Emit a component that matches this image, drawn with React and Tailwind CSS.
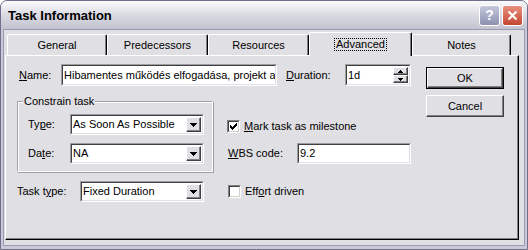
import React from "react";

const font = "font-['Liberation_Sans',Arial,sans-serif]";
const outerSunken =
  "border border-t-[#9d9da1] border-l-[#9d9da1] border-r-white border-b-white";
const innerSunken =
  "border border-t-[#404040] border-l-[#404040] border-r-[#e0dfe3] border-b-[#e0dfe3]";
const raised =
  "border border-t-white border-l-white border-r-[#404040] border-b-[#404040] bg-[#e0dfe3] shadow-[inset_-1px_-1px_0_#808080]";

const Arrow = ({ up }) => (
  <svg width="7" height="4" viewBox="0 0 7 4" shapeRendering="crispEdges">
    <path d={up ? "M3 0h1v1h1v1h1v1h1v1H0V3h1V2h1V1h1z" : "M0 0h7v1H6v1H5v1H4v1H3V3H2V2H1V1H0z"} fill="#000" />
  </svg>
);

const SmallArrow = ({ up }) => (
  <svg width="5" height="3" viewBox="0 0 5 3" shapeRendering="crispEdges">
    <path d={up ? "M2 0h1v1h1v1h1v1H0V2h1V1h1z" : "M0 0h5v1H4v1H3v1H2V2H1V1H0z"} fill="#000" />
  </svg>
);

const Field = ({ value, className, children }) => (
  <div className={`${outerSunken} ${className}`}>
    <div className={`${innerSunken} flex h-full items-stretch bg-white`}>
      <span className="flex min-w-0 flex-1 items-center overflow-hidden whitespace-nowrap pl-[1px]">
        {value}
      </span>
      {children}
    </div>
  </div>
);

const DropButton = () => (
  <div className={`m-[1px] flex w-[15px] shrink-0 items-center justify-center ${raised}`}>
    <Arrow />
  </div>
);

const Spinner = () => (
  <div className="m-[1px] flex w-[15px] shrink-0 flex-col">
    <div className={`flex flex-1 items-center justify-center ${raised}`}>
      <SmallArrow up />
    </div>
    <div className={`flex flex-1 items-center justify-center ${raised}`}>
      <SmallArrow />
    </div>
  </div>
);

const Check = ({ checked }) => (
  <div className="h-[13px] w-[13px] shrink-0 border border-t-[#808080] border-l-[#808080] border-r-white border-b-white">
    <div className="flex h-full w-full items-center justify-center border border-t-[#404040] border-l-[#404040] border-r-[#d4d0c8] border-b-[#d4d0c8] bg-white">
      {checked && (
        <svg width="7" height="7" viewBox="0 0 7 7" shapeRendering="crispEdges">
          <path
            d="M6 0h1v1H6zM5 1h2v1H5zM0 2h1v1H0zM4 2h3v1H4zM0 3h2v1H0zM3 3h3v1H3zM0 4h5v1H0zM1 5h3v1H1zM2 6h1v1H2z"
            fill="#000"
          />
        </svg>
      )}
    </div>
  </div>
);

const Button = ({ label, isDefault }) => (
  <div
    className={`flex h-[22px] w-[78px] ${
      isDefault ? "border border-black" : ""
    }`}
  >
    <div className="flex flex-1 items-center justify-center border border-t-white border-l-white border-r-[#404040] border-b-[#404040] bg-[#e0dfe3] shadow-[inset_-1px_-1px_0_#808080]">
      {label}
    </div>
  </div>
);

const tabs = [
  { label: "General", w: "w-[100px]" },
  { label: "Predecessors", w: "w-[101px]" },
  { label: "Resources", w: "w-[101px]" },
  { label: "Advanced", w: "w-[103px]", active: true },
  { label: "Notes", w: "w-[99px]" },
];

const Tab = ({ label, w, active }) =>
  active ? (
    <div
      className={`relative z-10 -mb-px flex h-[24px] ${w} items-center justify-center rounded-t-[2px] border border-b-0 border-t-white border-l-white border-r-black bg-[#e0dfe3] shadow-[inset_-1px_0_0_#808080]`}
    >
      <span className="border border-dotted border-black px-[1px] leading-[11px]">
        {label}
      </span>
    </div>
  ) : (
    <div
      className={`flex h-[21px] ${w} items-center justify-center rounded-t-[2px] border border-b-0 border-t-white border-l-white border-r-black bg-[#e0dfe3] pt-[1px] shadow-[inset_-1px_0_0_#808080]`}
    >
      {label}
    </div>
  );

export default function App() {
  return (
    <div
      className={`${font} flex h-[250px] w-[528px] flex-col rounded-t-[7px] border border-[#6f6f8d] bg-[#c8c8d6] text-[11px] leading-[13px] text-black`}
    >
      {/* title bar */}
      <div className="flex h-[28px] shrink-0 items-center rounded-t-[6px] bg-linear-to-b from-[#fbfbfd] via-[#dadae3] to-[#c3c3d0] pl-[7px] pr-[4px]">
        <span className="flex-1 pt-[2px] text-[13px] leading-[16px] font-bold">
          Task Information
        </span>
        <div className="flex gap-[2px] pt-[1px]">
          <div className="flex h-[21px] w-[21px] items-center justify-center rounded-[3px] border border-white bg-linear-to-b from-[#c5c8db] to-[#8c91b0] text-[14px] font-bold text-white">
            ?
          </div>
          <div className="flex h-[21px] w-[21px] items-center justify-center rounded-[3px] border border-white bg-linear-to-b from-[#e8907e] to-[#c24530]">
            <svg width="11" height="11" viewBox="0 0 11 11">
              <path d="M1.5 1.5l8 8M9.5 1.5l-8 8" stroke="#fff" strokeWidth="2.2" />
            </svg>
          </div>
        </div>
      </div>

      {/* body */}
      <div className="mx-[2px] mb-[3px] flex flex-1 flex-col border border-[#9a9ab0] bg-[#e0dfe3] pl-[1px] pt-[2px]">
        <div className="flex items-end pl-[2px]">
          {tabs.map((t) => (
            <Tab key={t.label} {...t} />
          ))}
        </div>

        <div className="flex h-[185px] w-[514px] border border-t-white border-l-white border-r-black border-b-black pl-[11px] pt-[8px] shadow-[inset_-1px_-1px_0_#808080]">
          {/* left column */}
          <div className="flex w-[399px] flex-col">
            <div className="flex h-[22px] items-center">
              <span className="w-[44px] pl-[2px]">
                <u>N</u>ame:
              </span>
              <Field
                className="h-[22px] w-[216px]"
                value="Hibamentes működés elfogadása, projekt a"
              />
              <span className="ml-[9px] w-[59px]">
                <u>D</u>uration:
              </span>
              <Field className="h-[22px] w-[66px]" value="1d">
                <Spinner />
              </Field>
            </div>

            <div className="mt-[15px] flex">
              <div className="relative h-[71px] w-[196px] border border-t-[#a0a0a8] border-l-[#a0a0a8] border-r-white border-b-white shadow-[inset_1px_1px_0_white,1px_1px_0_#a0a0a8]">
                <span className="absolute -top-[7px] left-[5px] bg-[#e0dfe3] px-[1px]">
                  Constrain task
                </span>
                <div className="flex flex-col gap-[8px] pl-[10px] pt-[12px]">
                  <div className="flex items-center">
                    <span className="w-[42px]">
                      Ty<u>p</u>e:
                    </span>
                    <Field className="h-[21px] w-[134px]" value="As Soon As Possible">
                      <DropButton />
                    </Field>
                  </div>
                  <div className="flex items-center">
                    <span className="w-[42px]">
                      Da<u>t</u>e:
                    </span>
                    <Field className="h-[21px] w-[134px]" value="NA">
                      <DropButton />
                    </Field>
                  </div>
                </div>
              </div>

              <div className="ml-[14px] flex flex-col pt-[19px]">
                <div className="flex items-center gap-[4px]">
                  <Check checked />
                  <span>
                    <u>M</u>ark task as milestone
                  </span>
                </div>
                <div className="mt-[10px] flex items-center">
                  <span className="w-[70px] pl-[1px]">
                    <u>W</u>BS code:
                  </span>
                  <Field className="h-[21px] w-[114px]" value="9.2" />
                </div>
              </div>
            </div>

            <div className="mt-[9px] flex items-center">
              <span className="w-[63px]">
                Task t<u>y</u>pe:
              </span>
              <Field className="h-[21px] w-[124px]" value="Fixed Duration">
                <DropButton />
              </Field>
              <div className="ml-[24px] flex items-center gap-[4px]">
                <Check />
                <span>
                  Eff<u>o</u>rt driven
                </span>
              </div>
            </div>
          </div>

          {/* buttons */}
          <div className="ml-[10px] flex flex-col gap-[6px] pt-[3px]">
            <Button label="OK" isDefault />
            <Button label="Cancel" />
          </div>
        </div>
      </div>
    </div>
  );
}
